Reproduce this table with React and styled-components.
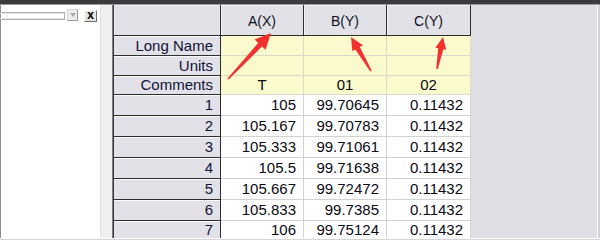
import React from "react";
import styled, { createGlobalStyle } from "styled-components";

const Global = createGlobalStyle`
  html, body { margin: 0; padding: 0; background: #dfdfe5; }
  * { box-sizing: border-box; }
`;

const Frame = styled.div`
  position: relative;
  width: 600px;
  height: 240px;
  overflow: hidden;
  display: flex;
  flex-direction: column;
  background: #d4d4d8;
  font-family: "Liberation Sans", Arial, sans-serif;
`;

const TopBar = styled.div`
  height: 5px;
  flex: none;
  background: #3b3b3b;
  border-bottom: 1px solid #9a9a9a;
`;

const Body = styled.div`
  height: 233px;
  flex: none;
  display: flex;
  overflow: hidden;
`;

const BottomEdge = styled.div`
  height: 2px;
  flex: none;
  border-top: 1px solid #ffffff;
  background: #d6d6da;
`;

const LeftPanel = styled.div`
  width: 100px;
  flex: none;
  background: #ffffff;
  border-left: 1px solid #8c8c8c;
  padding-top: 4px;
`;

const Toolbar = styled.div`
  display: flex;
  align-items: flex-start;
`;

const Combo = styled.div`
  width: 65px;
  height: 8px;
  margin-top: 3px;
  margin-left: -1px;
  border-top: 1px solid #b0b0b0;
  border-bottom: 1px solid #b0b0b0;
  border-right: 1px solid #b0b0b0;
  box-shadow: inset 0 1px 0 #e4e4e4, inset 0 -1px 0 #e4e4e4;
`;

const DropButton = styled.div`
  width: 11px;
  height: 12px;
  margin-left: 2px;
  background: #ececec;
  border: 1px solid #d8d8d8;
  border-right-color: #9a9a9a;
  border-bottom-color: #9a9a9a;
  display: flex;
  align-items: center;
  justify-content: center;
  &::after {
    content: "";
    border-left: 3px solid transparent;
    border-right: 3px solid transparent;
    border-top: 4px solid #a8a8a8;
  }
`;

const CloseButton = styled.div`
  width: 13px;
  height: 12px;
  margin-left: 6px;
  margin-top: 1px;
  background: #e4e4e4;
  border: 1px solid #ffffff;
  border-right-color: #6e6e6e;
  border-bottom-color: #6e6e6e;
  font-size: 12px;
  font-weight: 700;
  line-height: 8px;
  text-align: center;
  color: #000;
`;

const Splitter = styled.div`
  width: 13px;
  flex: none;
  background: #efefef;
  border-left: 1px solid #e2e2e2;
  border-right: 1px solid #7c7c7c;
`;

const Sheet = styled.div`
  flex: none;
  display: grid;
  grid-template-columns: 107px 83px 83px 84px;
  grid-template-rows: 31px 20px 20px 19px repeat(6, 21px) 17px;
  border-left: 1px solid #3a3a3a;
  align-content: start;
`;

const Cell = styled.div`
  display: flex;
  align-items: center;
  justify-content: ${(p) => (p.$center ? "center" : "flex-end")};
  padding-right: ${(p) => (p.$center ? "0" : "7px")};
  padding-bottom: ${(p) => (p.$last ? "0" : "1px")};
  font-size: 15px;
  line-height: 15px;
  color: #0a0a14;
  white-space: nowrap;
  border-right: 1px solid ${(p) => (p.$dark ? "#2e2e2e" : "#d2d2d2")};
  border-bottom: ${(p) => (p.$last ? "0" : "1px")} solid
    ${(p) => (p.$dark ? "#2e2e2e" : "#d2d2d2")};
  background: ${(p) => p.$bg || "#ffffff"};
`;

const ColHead = styled(Cell).attrs({ $dark: true, $center: true, $bg: "#e1e1e7" })`
  font-size: 14px;
  padding-top: 4px;
  color: #101020;
  box-shadow: inset 1px 1px 0 #f4f4f8;
`;

const RowHead = styled(Cell).attrs({ $dark: true, $bg: "#e1e1e7" })`
  color: #12123a;
  box-shadow: inset 0 1px 0 #fbfbfd;
`;

const MetaCell = styled(Cell).attrs({ $center: true, $bg: "#fafacc" })`
  border-right-color: #dadac8;
  border-bottom-color: #dadac8;
`;

const Filler = styled.div`
  flex: 1;
  background: #dfdfe5;
  border-right: 1px solid #ffffff;
  margin-right: 2px;
`;

const Overlay = styled.svg`
  position: absolute;
  left: 0;
  top: 0;
  pointer-events: none;
`;

function arrowPoints(tx, ty, hx, hy, headLen, headHalf, shaftTail, shaftHead) {
  const dx = hx - tx;
  const dy = hy - ty;
  const len = Math.hypot(dx, dy);
  const ux = dx / len;
  const uy = dy / len;
  const nx = -uy;
  const ny = ux;
  const bx = hx - ux * headLen;
  const by = hy - uy * headLen;
  const pts = [
    [tx + nx * shaftTail, ty + ny * shaftTail],
    [bx + nx * shaftHead, by + ny * shaftHead],
    [bx + nx * headHalf, by + ny * headHalf],
    [hx, hy],
    [bx - nx * headHalf, by - ny * headHalf],
    [bx - nx * shaftHead, by - ny * shaftHead],
    [tx - nx * shaftTail, ty - ny * shaftTail],
  ];
  return pts.map((p) => p.map((v) => v.toFixed(1)).join(",")).join(" ");
}

const arrows = [
  { t: [228, 79], h: [271, 33], L: 16, W: 7.5 },
  { t: [371, 71], h: [351, 37], L: 13, W: 6 },
  { t: [437, 69], h: [443, 37], L: 12, W: 5.5 },
];

const rows = [
  ["1", "105", "99.70645", "0.11432"],
  ["2", "105.167", "99.70783", "0.11432"],
  ["3", "105.333", "99.71061", "0.11432"],
  ["4", "105.5", "99.71638", "0.11432"],
  ["5", "105.667", "99.72472", "0.11432"],
  ["6", "105.833", "99.7385", "0.11432"],
  ["7", "106", "99.75124", "0.11432"],
];

const meta = [
  ["Long Name", "", "", ""],
  ["Units", "", "", ""],
  ["Comments", "T", "01", "02"],
];

export default function App() {
  return (
    <>
      <Global />
      <Frame>
        <TopBar />
        <Body>
          <LeftPanel>
            <Toolbar>
              <Combo />
              <DropButton />
              <CloseButton>x</CloseButton>
            </Toolbar>
          </LeftPanel>
          <Splitter />
          <Sheet>
            <ColHead />
            <ColHead>A(X)</ColHead>
            <ColHead>B(Y)</ColHead>
            <ColHead>C(Y)</ColHead>
            {meta.map((r) => (
              <React.Fragment key={r[0]}>
                <RowHead>{r[0]}</RowHead>
                <MetaCell>{r[1]}</MetaCell>
                <MetaCell>{r[2]}</MetaCell>
                <MetaCell>{r[3]}</MetaCell>
              </React.Fragment>
            ))}
            {rows.map((r, i) => {
              const last = i === rows.length - 1;
              return (
                <React.Fragment key={r[0]}>
                  <RowHead $last={last}>{r[0]}</RowHead>
                  <Cell $last={last}>{r[1]}</Cell>
                  <Cell $last={last}>{r[2]}</Cell>
                  <Cell $last={last}>{r[3]}</Cell>
                </React.Fragment>
              );
            })}
          </Sheet>
          <Filler />
        </Body>
        <BottomEdge />
        <Overlay width="600" height="240" viewBox="0 0 600 240">
          {arrows.map((a, i) => (
            <polygon
              key={i}
              points={arrowPoints(a.t[0], a.t[1], a.h[0], a.h[1], a.L, a.W, 0.8, 2.6)}
              fill="#f2302e"
            />
          ))}
        </Overlay>
      </Frame>
    </>
  );
}
